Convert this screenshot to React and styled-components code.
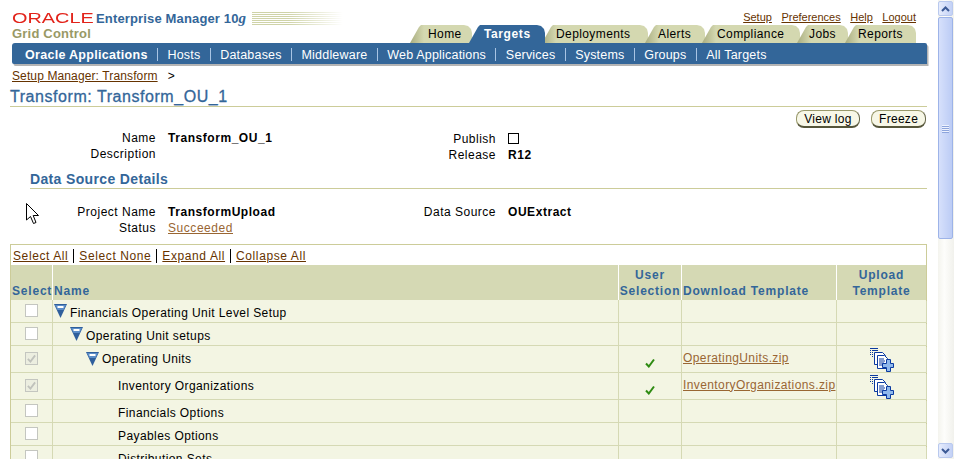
import React from "react";
import styled, { createGlobalStyle } from "styled-components";

const Global = createGlobalStyle`
  html, body { margin: 0; padding: 0; background: #fff; overflow: hidden; }
  body { font-family: "Liberation Sans", Arial, sans-serif; font-size: 12px; color: #000; }
`;
const Window = styled.div`display: flex; width: 954px; height: 459px; overflow: hidden; position: relative;`;
const Page = styled.div`flex: 0 0 938px; height: 459px; overflow: hidden; padding: 0 11px 0 10px; box-sizing: border-box;`;

const Head = styled.div`display: flex; justify-content: space-between; height: 43px; position: relative;`;
const Brand = styled.div`padding: 9px 0 0 2px; width: 331px;`;
const BrandTop = styled.div`display: flex; align-items: center; height: 18px; white-space: nowrap;`;
const Oracle = styled.span`color: #e2231a; font-size: 14.5px; line-height: 18px; transform: scale(1.37, 1.02); transform-origin: left center; width: 84px; flex: none;`;
const Em = styled.span`color: #336699; font-size: 13px; font-weight: bold; letter-spacing: 0.15px; width: 156px; flex: none;`;
const Italic = styled.i`font-family: "Liberation Serif", serif; font-size: 15px;`;
const Stripes = styled.div`flex: 1; height: 13px; background: repeating-linear-gradient(to bottom, #cfd3a8 0 1px, #fff 1px 2px); -webkit-mask: linear-gradient(to right, #000 40%, transparent); mask: linear-gradient(to right, #000 40%, transparent);`;
const Grid = styled.div`color: #999966; font-size: 13px; font-weight: bold; line-height: 14px; letter-spacing: 0.2px;`;
const HeadRight = styled.div`display: flex; flex-direction: column; align-items: flex-end; padding-right: 11px;`;
const Globals = styled.div`display: flex; gap: 9.5px; height: 25px; padding-top: 11px; box-sizing: border-box; line-height: 13px;`;
const GLink = styled.a`color: #663300; text-decoration: underline; font-size: 11px;`;
const Tabs = styled.div`display: flex; height: 18px;`;
const Tab = styled.div`
  width: ${p => p.$w}px; margin-left: -3px; height: 18px; box-sizing: border-box; padding-left: ${p => p.$pad}px; line-height: 18px; font-size: 12px; letter-spacing: ${p => p.$active ? 0.6 : 0.4}px; white-space: nowrap;
  clip-path: polygon(0 100%, 9px 2px, 11px 0, calc(100% - 8px) 0, calc(100% - 4px) 1px, calc(100% - 1px) 4px, 100% 8px, 100% 100%);
  color: ${p => p.$active ? "#fff" : "#000"}; font-weight: ${p => p.$active ? "bold" : "normal"};
  background: ${p => p.$active ? "#336699" : "linear-gradient(to right, #a9ad80 0, #d4d8b0 14px)"};
  z-index: ${p => p.$active ? 2 : 1};
`;
const Nav = styled.div`display: flex; align-items: center; height: 21px; padding: 2px 0 0 13px; box-sizing: border-box; margin-left: 2px; background: #336699; border-radius: 3px 2px 0 2px; box-shadow: 1.5px 2px 0 #b4b4b4; color: #fff; font-size: 12.5px; letter-spacing: 0.2px;`;
const NavItem = styled.span`font-weight: ${p => p.$on ? "bold" : "normal"}; white-space: nowrap; letter-spacing: ${p => p.$on ? 0.3 : 0.2}px;`;
const NavSep = styled.span`width: 1px; height: 13px; background: #a8c4e4; margin: 0 9.4px;`;

const Crumbs = styled.div`display: flex; gap: 10px; padding: 3px 0 0 2px; height: 18px; box-sizing: border-box; line-height: 15px; font-size: 12px; margin-top: 2px; letter-spacing: 0.12px;`;
const Crumb = styled.a`color: #663300; text-decoration: underline;`;
const Title = styled.h1`margin: 0; color: #336699; font-size: 16px; font-weight: normal; -webkit-text-stroke: 0.3px #336699; line-height: 20px; height: 23px; padding-top: 3px; box-sizing: border-box; border-bottom: 1px solid #cccc99; letter-spacing: 0.55px;`;
const Actions = styled.div`display: flex; justify-content: flex-end; gap: 11px; padding: 3px 1px 0 0; height: 20px; box-sizing: border-box;`;
const Btn = styled.button`height: 18px; box-sizing: border-box; padding: 0 7px; font: 12px "Liberation Sans", Arial, sans-serif; letter-spacing: 0.3px; width: ${p => p.$w}px; color: #000; background: #f7f7e7; border: 1px solid #99996c; border-bottom: 2px solid #55553a; border-right-color: #66664a; border-radius: 8px; line-height: 14px;`;

const Form = styled.div`display: grid; grid-template-columns: 146px 240px 100px 1fr; grid-auto-rows: 16px; line-height: 16px; padding-top: ${p => p.$top}px;`;
const Label = styled.div`text-align: right; white-space: nowrap; letter-spacing: 0.5px; padding-top: ${p => p.$low ? 1 : 0}px;`;
const Value = styled.div`padding: ${p => p.$low ? 1 : 0}px 0 0 12px; font-weight: ${p => p.$plain ? "normal" : "bold"}; white-space: nowrap; letter-spacing: 0.55px;`;
const Box = styled.span`display: inline-block; width: 9px; height: 9px; border: 1px solid #000; vertical-align: -1px;`;
const Sub = styled.h2`margin: 9px 0 0 20px; color: #336699; font-size: 14px; font-weight: bold; line-height: 17px; height: 17px; border-bottom: 1px solid #cccc99; letter-spacing: 0.35px;`;
const Status = styled.a`color: #996633; text-decoration: underline; font-weight: normal;`;

const TableWrap = styled.div`margin-top: 8px; border: 1px solid #cccc99; border-bottom: 0;`;
const Toolbar = styled.div`display: flex; align-items: center; height: 20px; padding: 2px 0 0 2px; box-sizing: border-box; gap: 5px;`;
const ToolLink = styled.a`color: #663300; text-decoration: underline; letter-spacing: 0.6px;`;
const ToolSep = styled.span`width: 1px; height: 14px; background: #000;`;
const Table = styled.div`display: grid; grid-template-columns: 41px 565px 62px 154px 1fr; column-gap: 1px;`;
const Th = styled.div`background: #d5d9b4; color: #336699; font-weight: bold; height: 35px; display: flex; align-items: flex-end; justify-content: ${p => p.$center ? "center" : "flex-start"}; text-align: center; line-height: 16px; padding: 0 1px 1px; box-sizing: border-box; letter-spacing: 0.8px; white-space: pre-line; box-shadow: 1px 0 0 ${p => p.$last ? "transparent" : "#fff"};`;
const Td = styled.div`background: #f3f5e3; height: ${p => p.$h}px; margin-bottom: 1px; display: flex; align-items: center; justify-content: ${p => p.$center ? "center" : "flex-start"}; box-shadow: 1px 0 0 ${p => p.$last ? "transparent" : "#d5d9b4"}, 0 1px 0 #d5d9b4, 1px 1px 0 #d5d9b4; letter-spacing: 0.41px; white-space: nowrap; padding-left: ${p => p.$indent || 0}px; box-sizing: border-box;`;
const Check = styled.span`width: 11px; height: 11px; border: 1px solid #c4c6c0; background: ${p => p.$on ? "#eceee0" : "#fff"}; display: flex; align-items: center; justify-content: center; margin-top: -1px;`;
const FileLink = styled.a`color: #996633; text-decoration: underline; margin-left: 1px; margin-top: -3px; letter-spacing: 0.4px;`;
const TickCell = styled.span`display: flex; margin-top: 8px;`;
const IconCell = styled.span`display: flex; margin-top: 1px;`;
const Cursor = styled.svg`position: absolute; left: 26px; top: 203px;`;
const RowName = styled.span`margin-left: ${p => p.$gap || 0}px; padding-top: ${p => p.$low ? 3 : 0}px;`;

const Bar = styled.div`flex: 0 0 16px; height: 459px; background: linear-gradient(to right, #f4f4ee, #fdfdfb 40%, #f1f1ec); display: flex; flex-direction: column; padding-right: 1px; box-sizing: border-box;`;
const ScrollBtn = styled.div`height: 15px; margin: ${p => p.$down ? "auto 0 1px" : "1px 0 1px"}; border: 1px solid #b9c9ee; border-radius: 2px; box-sizing: border-box; background: linear-gradient(to right, #e6ecfc, #c3d1f6); display: flex; align-items: center; justify-content: center;`;
const Thumb = styled.div`height: 222px; box-sizing: border-box; border: 1px solid #9db3e8; border-radius: 2px; background: linear-gradient(to right, #d6e0fb, #bcccf5); display: flex; flex-direction: column; gap: 1px; align-items: center; justify-content: center;`;
const Grip = styled.span`width: 7px; height: 1px; background: #eef2fe; box-shadow: 0 1px 0 #8ca4dc;`;

const Tri = () => (
  <svg width="13" height="14" viewBox="0 0 13 14" style={{ flex: "none" }}>
    <path d="M0 0H13L6.5 14Z" fill="#2f5f9c" />
    <path d="M1 1H12L9.5 6H3.5Z" fill="#5b8dc8" />
    <rect x="3.5" y="2" width="6" height="2" fill="#fff" />
  </svg>
);
const Tick = ({ c = "#c0c2bc", w = 9 }) => (
  <svg width={w} height={w} viewBox="0 0 10 10"><path d="M1 5.5 3.8 8.5 9 1.5" fill="none" stroke={c} strokeWidth="2" /></svg>
);
const Upload = () => (
  <svg width="24" height="24" viewBox="0 0 24 24" style={{ flex: "none" }}>
    <path d="M0 .5H8M0 2.5H1M2 2.5H8M0 4.5H1M2 4.5H3M0 6.5H1M2 6.5H3M2 8.5H3" stroke="#0a3aa0" />
    <path d="M4.5 4.5H12.5L15.5 7.5V16.5H4.5Z" fill="#fff" stroke="#0a3aa0" />
    <path d="M7.5 7.5H14.5L17.5 10.5V20.5H7.5Z" fill="#fff" stroke="#0a3aa0" />
    <path d="M9 11H14M9 13H15M9 15H14M9 17H12" stroke="#0a3aa0" />
    <path d="M16.5 11.5H20.5V15.5H23.5V19.5H20.5V23.5H16.5V19.5H12.5V15.5H16.5Z" fill="#8fb8ec" stroke="#0a3aa0" />
  </svg>
);

const rows = [
  { h: 22, indent: 0, tri: true, name: "Financials Operating Unit Level Setup", low: true },
  { h: 22, indent: 16, tri: true, name: "Operating Unit setups", low: true },
  { h: 26, indent: 32, tri: true, name: "Operating Units", on: true, file: "OperatingUnits.zip" },
  { h: 26, indent: 65, name: "Inventory Organizations", on: true, file: "InventoryOrganizations.zip" },
  { h: 22, indent: 65, name: "Financials Options", low: true },
  { h: 22, indent: 65, name: "Payables Options", low: true },
  { h: 22, indent: 65, name: "Distribution Sets", low: true },
];
const tabs = [
  ["Home", 62, 18], ["Targets", 76, 15, true], ["Deployments", 106, 14], ["Alerts", 60, 13],
  ["Compliance", 98, 15], ["Jobs", 51, 12], ["Reports", 71, 13],
];
const navs = ["Hosts", "Databases", "Middleware", "Web Applications", "Services", "Systems", "Groups", "All Targets"];

export default function App() {
  return (
    <Window>
      <Global />
      <Page>
        <Head>
          <Brand>
            <BrandTop>
              <Oracle>ORACLE</Oracle>
              <Em>Enterprise Manager 10<Italic>g</Italic></Em>
              <Stripes />
            </BrandTop>
            <Grid>Grid Control</Grid>
          </Brand>
          <HeadRight>
            <Globals>
              <GLink>Setup</GLink><GLink>Preferences</GLink><GLink>Help</GLink><GLink>Logout</GLink>
            </Globals>
            <Tabs>
              {tabs.map(([t, w, pad, active]) => <Tab key={t} $w={w} $pad={pad} $active={active}>{t}</Tab>)}
            </Tabs>
          </HeadRight>
        </Head>
        <Nav>
          <NavItem $on>Oracle Applications</NavItem>
          {navs.map(n => <React.Fragment key={n}><NavSep /><NavItem>{n}</NavItem></React.Fragment>)}
        </Nav>
        <Crumbs><Crumb>Setup Manager: Transform</Crumb><span>&gt;</span></Crumbs>
        <Title>Transform: Transform_OU_1</Title>
        <Actions><Btn $w={64}>View log</Btn><Btn $w={55}>Freeze</Btn></Actions>
        <Form $top={3}>
          <Label>Name</Label><Value>Transform_OU_1</Value><Label $low>Publish</Label><Value $low><Box /></Value>
          <Label>Description</Label><Value /><Label $low>Release</Label><Value $low>R12</Value>
        </Form>
        <Sub>Data Source Details</Sub>
        <Form $top={15}>
          <Label>Project Name</Label><Value>TransformUpload</Value><Label>Data Source</Label><Value>OUExtract</Value>
          <Label>Status</Label><Value><Status>Succeeded</Status></Value><span /><span />
        </Form>
        <TableWrap>
          <Toolbar>
            <ToolLink>Select All</ToolLink><ToolSep /><ToolLink>Select None</ToolLink><ToolSep />
            <ToolLink>Expand All</ToolLink><ToolSep /><ToolLink>Collapse All</ToolLink>
          </Toolbar>
          <Table>
            <Th>Select</Th><Th>Name</Th>
            <Th $center>{"User\nSelection"}</Th><Th>Download Template</Th><Th $center $last>{"Upload\nTemplate"}</Th>
            {rows.map(r => (
              <React.Fragment key={r.name}>
                <Td $h={r.h} $center><Check $on={r.on}>{r.on && <Tick />}</Check></Td>
                <Td $h={r.h} $indent={r.indent + (r.tri ? 1 : 0)}>
                  {r.tri && <Tri />}
                  <RowName $gap={r.tri ? 3 : 0} $low={r.low}>{r.name}</RowName>
                </Td>
                <Td $h={r.h} $center>{r.on && <TickCell><Tick c="#2e8b12" w={10} /></TickCell>}</Td>
                <Td $h={r.h}>{r.file && <FileLink>{r.file}</FileLink>}</Td>
                <Td $h={r.h} $center $last>{r.file && <IconCell><Upload /></IconCell>}</Td>
              </React.Fragment>
            ))}
          </Table>
        </TableWrap>
      </Page>
      <Bar>
        <ScrollBtn>
          <svg width="9" height="6" viewBox="0 0 9 6"><path d="M1 5 4.5 1.5 8 5" fill="none" stroke="#3c5a96" strokeWidth="2" /></svg>
        </ScrollBtn>
        <Thumb><Grip /><Grip /><Grip /><Grip /></Thumb>
        <ScrollBtn $down>
          <svg width="9" height="6" viewBox="0 0 9 6"><path d="M1 1 4.5 4.5 8 1" fill="none" stroke="#3c5a96" strokeWidth="2" /></svg>
        </ScrollBtn>
      </Bar>
      <Cursor width="13" height="22" viewBox="0 0 13 22">
        <path d="M.5.5V17L4.5 13.5 7.5 20.5 10 19.5 7.2 12.5H12.5Z" fill="#fff" stroke="#000" />
      </Cursor>
    </Window>
  );
}
